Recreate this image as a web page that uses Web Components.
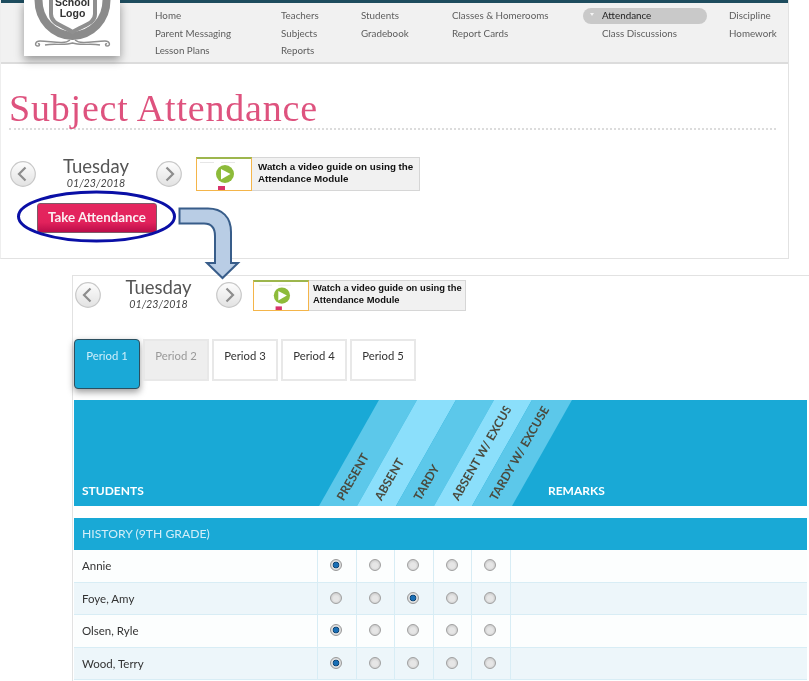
<!DOCTYPE html>
<html>
<head>
<meta charset="utf-8">
<title>Subject Attendance</title>
<style>
  html, body { margin: 0; background: #fff; }
  body { width: 809px; height: 681px; overflow: hidden; position: relative; font-family: Lato, "Liberation Sans", sans-serif; filter: blur(.3px); }
</style>
</head>
<body>
<top-panel>
  <school-header></school-header>
  <page-title>Subject Attendance</page-title>
  <date-nav day="Tuesday" date="01/23/2018" style="--pad:27px 0 0 9px; --mid:120px; --gap:14px; --banner:224px; --banner-h:34px; --btn-top:4px; --day-top:-1px; --guide-font:9.8px; --guide-pad:3px 0 0 6px"></date-nav>
  <take-button>Take Attendance</take-button>
</top-panel>
<flow-callout></flow-callout>
<detail-panel>
  <date-nav day="Tuesday" date="01/23/2018" style="--pad:4px 0 0 2px; --mid:115px; --gap:11px; --banner:213px; --banner-h:31px; --btn-top:2px; --day-top:-3px; --guide-font:9.4px; --guide-pad:1px 0 0 4px"></date-nav>
  <period-tabs></period-tabs>
  <slant-header></slant-header>
  <section-bar>HISTORY (9TH GRADE)</section-bar>
  <student-row name="Annie" mark="0"></student-row>
  <student-row name="Foye, Amy" mark="2" alt></student-row>
  <student-row name="Olsen, Ryle" mark="0"></student-row>
  <student-row name="Wood, Terry" mark="0" alt></student-row>
</detail-panel>

<script>
class TopPanel extends HTMLElement {
  constructor() {
    super();
    this.attachShadow({ mode: 'open' });
    this.shadowRoot.innerHTML = `
    <style>
      :host { display: block; width: 789px; height: 259px; box-sizing: border-box; border-right: 1px solid #e2e2e2; border-bottom: 1px solid #e2e2e2; border-left: 1px solid #eee; }
    </style>
    <slot></slot>`;
  }
}

class SchoolHeader extends HTMLElement {
  constructor() {
    super();
    this.attachShadow({ mode: 'open' });
    const cols = [
      ['Home', 'Parent Messaging', 'Lesson Plans'],
      ['Teachers', 'Subjects', 'Reports'],
      ['Students', 'Gradebook'],
      ['Classes &amp; Homerooms', 'Report Cards'],
      ['Attendance', 'Class Discussions'],
      ['Discipline', 'Homework']
    ];
    const nav = cols.map((items, i) => `<ul>${items.map((t, j) =>
      i === 4 && j === 0 ? `<li class="on"><span>${t}</span></li>` : `<li>${t}</li>`).join('')}</ul>`).join('');
    this.shadowRoot.innerHTML = `
    <style>
      :host { display: block; height: 64px; box-sizing: border-box; position: relative; background: #f1f1f1; border-top: 3px solid #1d4c5e; border-bottom: 2px solid #dcdcdc; }
      .logo { position: absolute; left: 23px; top: -3px; width: 96px; height: 56px; background: #fff; box-shadow: 0 4px 9px rgba(0,0,0,.38); }
      svg { display: block; }
      svg text { font: 700 10.5px "Liberation Sans", sans-serif; fill: #333; text-anchor: middle; }
      nav { display: grid; grid-template-columns: 126px 80px 91px 150px 127px auto; padding: 6px 0 0 154px; font-size: 9.8px; color: #5d5d5d; }
      ul { list-style: none; margin: 0; padding: 0; }
      li { height: 17.500px; line-height: 13px; white-space: nowrap; }
      li.on { position: relative; color: #222; }
      li.on::before { content: ""; position: absolute; left: -19px; top: -1px; width: 124px; height: 16px; border-radius: 8px; background: #c9c9c9; }
      li.on::after { content: ""; position: absolute; left: -12px; top: 4px; border: 2.500px solid transparent; border-top: 3px solid #f4f4f4; }
      li.on span { position: relative; }
    </style>
    <div class="logo">
      <svg width="96" height="56" viewBox="0 0 96 56">
        <path d="M14.500 0C14.500 20 29 35 48.500 36C68 35 82.500 20 82.500 0" fill="none" stroke="#8b8b8b" stroke-width="8"/>
        <path d="M27 0V14C27 24 38 25 48.500 32C59 25 71 24 71 14V0" fill="#fff" stroke="#8f8f8f" stroke-width="4"/>
        <text x="48.500" y="6">School</text>
        <text x="48.500" y="16.500">Logo</text>
        <path d="M46 40C40 45 27 41 16 41C11 41 10 46 14 46C16 46 16 43 14 44M51 40C57 45 70 41 81 41C86 41 87 46 83 46C81 46 81 43 83 44M21 45C31 43 40 46 48.500 43C57 46 66 43 76 45" fill="none" stroke="#8f8f8f" stroke-width="1.400"/>
      </svg>
    </div>
    <nav>${nav}</nav>`;
  }
}

class PageTitle extends HTMLElement {
  constructor() {
    super();
    this.attachShadow({ mode: 'open' });
    this.shadowRoot.innerHTML = `
    <style>
      :host { display: block; margin: 0 12px 0 8px; height: 66px; box-sizing: border-box; padding-top: 22px; border-bottom: 2px dotted #dcdcdc; font: 38px/44px "Liberation Serif", serif; color: #de527e; letter-spacing: .8px; white-space: nowrap; }
    </style>
    <slot></slot>`;
  }
}

class DateNav extends HTMLElement {
  constructor() {
    super();
    this.attachShadow({ mode: 'open' });
    const chevron = d => `<svg width="26" height="26" viewBox="0 0 26 26"><circle cx="13" cy="13" r="12.300" fill="url(#g)" stroke="#c8c8c8" stroke-width="1.200"/><defs><linearGradient id="g" x1="0" y1="0" x2="0" y2="1"><stop offset="0" stop-color="#fdfdfd"/><stop offset="1" stop-color="#e2e2e2"/></linearGradient></defs><path d="${d}" fill="none" stroke="#8d8d8d" stroke-width="2.200"/></svg>`;
    this.shadowRoot.innerHTML = `
    <style>
      :host { display: flex; align-items: flex-start; padding: var(--pad); height: var(--banner-h); }
      svg { display: block; flex: none; }
      .btn { padding-top: var(--btn-top); }
      .mid { width: var(--mid); text-align: center; color: #555; margin-top: var(--day-top); }
      .day { font-size: 18.500px; line-height: 20px; }
      .date { font-size: 10.700px; line-height: 14px; font-style: italic; color: #444; }
      video-guide { margin-left: var(--gap); width: var(--banner); height: var(--banner-h); }
    </style>
    <div class="btn">${chevron('M15.500 6.500L9 13L15.500 19.500')}</div>
    <div class="mid"><div class="day">${this.getAttribute('day')}</div><div class="date">${this.getAttribute('date')}</div></div>
    <div class="btn">${chevron('M10.500 6.500L17 13L10.500 19.500')}</div>
    <video-guide></video-guide>`;
  }
}

class VideoGuide extends HTMLElement {
  constructor() {
    super();
    this.attachShadow({ mode: 'open' });
    this.shadowRoot.innerHTML = `
    <style>
      :host { display: flex; box-sizing: border-box; background: #f1f1f1; border: 1px solid #d6d6d6; }
      .thumb { width: 56px; flex: none; margin: -1px 0 -1px -1px; box-sizing: border-box; background: #fff; border: 1px solid #f4b54a; border-top: 2px solid #9db64d; }
      svg { display: block; width: 100%; height: 100%; }
      p { margin: 0; padding: var(--guide-pad); font: 700 var(--guide-font)/12px "Liberation Sans", sans-serif; color: #111; white-space: nowrap; }
    </style>
    <div class="thumb">
      <svg viewBox="0 0 54 31" preserveAspectRatio="xMidYMid meet">
        <circle cx="28" cy="15" r="9" fill="#8dbb3a"/><path d="M24 10V20.500L33.500 15Z" fill="#fff"/>
        <rect x="21" y="27" width="7" height="4" fill="#d8336b"/><rect x="3" y="3" width="14" height="1" fill="#e6e6e6"/><rect x="24" y="3" width="14" height="1" fill="#e6e6e6"/>
      </svg>
    </div>
    <p>Watch a video guide on using the<br>Attendance Module</p>`;
  }
}

class TakeButton extends HTMLElement {
  constructor() {
    super();
    this.attachShadow({ mode: 'open' });
    this.shadowRoot.innerHTML = `
    <style>
      :host { display: block; margin: 12px 0 0 36px; width: 120px; }
      button { display: block; width: 100%; height: 30px; padding: 0 0 2px; box-sizing: border-box; border: 1px solid #7d5a66; border-radius: 3px; background: linear-gradient(#e5265f 0, #e2225c 65%, #bb0d4a 100%); color: #fbeef2; font: 700 13.300px Lato, sans-serif; }
    </style>
    <button><slot></slot></button>`;
  }
}

class FlowCallout extends HTMLElement {
  constructor() {
    super();
    this.attachShadow({ mode: 'open' });
    this.shadowRoot.innerHTML = `
    <style>
      :host { display: block; position: absolute; left: 0; top: 0; width: 260px; height: 290px; pointer-events: none; z-index: 2; }
    </style>
    <svg width="260" height="290" viewBox="0 0 260 290">
      <ellipse cx="96.500" cy="216.500" rx="78" ry="24.500" fill="none" stroke="#0a0fa6" stroke-width="3"/>
      <path d="M179.500 208.500H208C222 208.500 231 217 231 232V263H238L222.500 278L207 263H215V236C215 228 211 223.500 204 223.500H179.500Z" fill="#b9cde5" stroke="#385d8a" stroke-width="2"/>
    </svg>`;
  }
}

class DetailPanel extends HTMLElement {
  constructor() {
    super();
    this.attachShadow({ mode: 'open' });
    this.shadowRoot.innerHTML = `
    <style>
      :host { display: block; margin: 16px 0 0 72px; height: 406px; box-sizing: border-box; border-top: 1px solid #e2e2e2; border-left: 1px solid #e2e2e2; }
    </style>
    <slot></slot>`;
  }
}

class PeriodTabs extends HTMLElement {
  constructor() {
    super();
    this.attachShadow({ mode: 'open' });
    const tabs = ['Period 1', 'Period 2', 'Period 3', 'Period 4', 'Period 5'];
    this.shadowRoot.innerHTML = `
    <style>
      :host { display: flex; gap: 3px; margin: 28px 0 0 1px; height: 61px; align-items: flex-start; }
      div { width: 66px; height: 42px; box-sizing: border-box; border: 2px solid #e8e8e8; padding-top: 8px; text-align: center; font-size: 11.300px; line-height: 14px; color: #333; background: #fff; }
      .on { height: 50px; background: #1aa9d7; color: #cdeefa; border: 1px solid #2c4f5f; border-radius: 4px; padding-top: 9px; box-shadow: 0 3px 7px rgba(0,0,0,.4); }
      .off { background: #eee; color: #999; }
    </style>
    ${tabs.map((t, i) => `<div class="${i === 0 ? 'on' : i === 1 ? 'off' : ''}">${t}</div>`).join('')}`;
  }
}

class SlantHeader extends HTMLElement {
  constructor() {
    super();
    this.attachShadow({ mode: 'open' });
    const labels = ['PRESENT', 'ABSENT', 'TARDY', 'ABSENT W/ EXCUSE', 'TARDY W/ EXCUSE'];
    this.shadowRoot.innerHTML = `
    <style>
      :host { display: grid; grid-template-columns: 245px 38px 39px 38px 38px 40px 1fr; height: 106px; margin: 0 2px 0 1px; background: #19a9d6; color: #fff; font-size: 12px; font-weight: 700; }
      .plain { align-self: end; padding: 0 0 8px 8px; line-height: 14px; }
      .remarks { padding-left: 36px; }
      .cell { position: relative; }
      .cell::before { content: ""; position: absolute; inset: 0; background: #5cc8ea; transform: skewX(-29.500deg); transform-origin: left bottom; }
      .cell.lite::before { background: #8bdffb; }
      .cell span { position: absolute; left: 27px; bottom: 3px; width: 106px; height: 14px; line-height: 14px; overflow: hidden; white-space: nowrap; color: #4a4a3e; font-weight: 700; font-size: 12px; transform: rotate(-60deg); transform-origin: left bottom; }
    </style>
    <div class="plain">STUDENTS</div>
    ${labels.map((t, i) => `<div class="cell ${i % 2 ? 'lite' : ''}"><span>${t}</span></div>`).join('')}
    <div class="plain remarks">REMARKS</div>`;
  }
}

class SectionBar extends HTMLElement {
  constructor() {
    super();
    this.attachShadow({ mode: 'open' });
    this.shadowRoot.innerHTML = `
    <style>
      :host { display: block; margin: 12px 2px 0 1px; height: 32px; box-sizing: border-box; padding-left: 8px; background: #19a9d6; color: #d3eef8; font-size: 12.200px; line-height: 32px; }
    </style>
    <slot></slot>`;
  }
}

class StudentRow extends HTMLElement {
  constructor() {
    super();
    this.attachShadow({ mode: 'open' });
    const mark = Number(this.getAttribute('mark'));
    const name = this.getAttribute('name');
    const cells = [0, 1, 2, 3, 4].map(i =>
      `<label><input type="radio" name="r" ${i === mark ? 'checked' : ''}></label>`).join('');
    this.shadowRoot.innerHTML = `
    <style>
      :host { display: grid; grid-template-columns: 244px 38.500px 38.500px 38.500px 38.500px 38.500px 1fr; height: 32.500px; margin: 0 2px 0 1px; box-sizing: border-box; border-bottom: 1px solid #d8edf5; background: #fcfefe; }
      :host([alt]) { background: #edf6fa; }
      div, label { display: flex; align-items: center; box-sizing: border-box; border-right: 1px solid #d8edf5; }
      div { padding-left: 8px; font-size: 11.500px; color: #333; }
      label { justify-content: center; }
      .rest { border: 0; }
      input { appearance: none; -webkit-appearance: none; margin: 0 0 1px -1px; width: 12px; height: 12px; border-radius: 50%; border: 1px solid #a0a0a0; background: radial-gradient(circle at 50% 55%, #e6e6e6 0 35%, #bdbdbd 100%); }
      input:checked { background: radial-gradient(circle, #1a6fb5 0 32%, #0f3d66 42%, #e5e5e5 52%, #c4c4c4 100%); border-color: #999; }
    </style>
    <div>${name}</div>${cells}<div class="rest"></div>`;
  }
}

customElements.define('video-guide', VideoGuide);
customElements.define('top-panel', TopPanel);
customElements.define('school-header', SchoolHeader);
customElements.define('page-title', PageTitle);
customElements.define('date-nav', DateNav);
customElements.define('take-button', TakeButton);
customElements.define('flow-callout', FlowCallout);
customElements.define('detail-panel', DetailPanel);
customElements.define('period-tabs', PeriodTabs);
customElements.define('slant-header', SlantHeader);
customElements.define('section-bar', SectionBar);
customElements.define('student-row', StudentRow);
</script>
</body>
</html>
